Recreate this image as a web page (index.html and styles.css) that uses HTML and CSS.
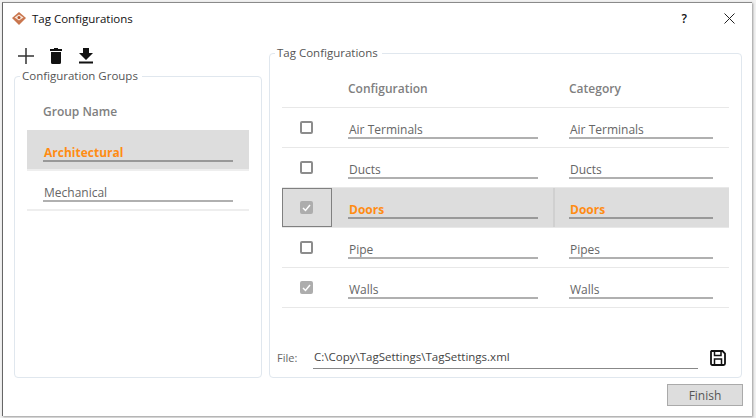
FILE: index.html
```html
<!DOCTYPE html>
<html>
	<head>
		<meta charset="UTF-8">
		<title>Tag Configurations</title>
		<link rel="stylesheet" href="styles.css">
	</head>
	<body>
		<div class="window">
			<div class="titlebar">
				<svg class="logo" width="14" height="13" viewBox="0 0 14 13">
					<path d="M7 0 14 6 7 13 0 6Z" fill="#c9764e"/>
					<path d="M2.500 5.500 7 2.500 11.500 5.500 7 8.500Z" fill="#f8e6da"/>
					<circle cx="7" cy="5.500" r="1.500" fill="#b5562c"/>
				</svg>
				<span class="title">Tag Configurations</span>
				<span class="help">?</span>
				<svg class="close" width="11" height="11" viewBox="0 0 11 11">
					<path d="M.5.5 10.500 10.500M10.500.5.500 10.500" stroke="#222" fill="none"/>
				</svg>
			</div>
			<div class="main">
				<div class="left">
					<div class="toolbar">
						<svg width="16" height="16" viewBox="0 0 16 16">
							<path d="M8 0V16M0 8H16" stroke="#333" stroke-width="1.500" fill="none"/>
						</svg>
						<svg width="12" height="16" viewBox="0 0 12 16">
							<path d="M4 0H8V1H12V3H0V1H4ZM1 4H11V14.500Q11 16 9.500 16H2.500Q1 16 1 14.500Z" fill="#111"/>
						</svg>
						<svg width="14" height="16" viewBox="0 0 14 16">
							<path d="M4 0H10V5H14L7 12 0 5H4ZM0 13.500H14V15.500H0Z" fill="#111"/>
						</svg>
					</div>
					<fieldset class="panel groups">
						<legend>Configuration Groups</legend>
						<div class="group-head">Group Name</div>
						<div class="group-row selected"><span class="field">Architectural</span></div>
						<div class="group-row"><span class="field">Mechanical</span></div>
					</fieldset>
				</div>
				<fieldset class="panel tags">
					<legend>Tag Configurations</legend>
					<div class="tag-row head">
						<div class="cell-check"></div>
						<div class="cell-conf">Configuration</div>
						<div class="cell-cat">Category</div>
					</div>
					<div class="tag-row">
						<div class="cell-check"><span class="box"></span></div>
						<div class="cell-conf"><span class="field">Air Terminals</span></div>
						<div class="cell-cat"><span class="field">Air Terminals</span></div>
					</div>
					<div class="tag-row">
						<div class="cell-check"><span class="box"></span></div>
						<div class="cell-conf"><span class="field">Ducts</span></div>
						<div class="cell-cat"><span class="field">Ducts</span></div>
					</div>
					<div class="tag-row selected">
						<div class="cell-check">
							<span class="box checked">
								<svg width="9" height="8" viewBox="0 0 9 8"><path d="M1 4 3.500 6.500 8 1" stroke="#fff" stroke-width="1.500" fill="none"/></svg>
							</span>
						</div>
						<div class="cell-conf"><span class="field">Doors</span></div>
						<div class="cell-cat"><span class="field">Doors</span></div>
					</div>
					<div class="tag-row">
						<div class="cell-check"><span class="box"></span></div>
						<div class="cell-conf"><span class="field">Pipe</span></div>
						<div class="cell-cat"><span class="field">Pipes</span></div>
					</div>
					<div class="tag-row">
						<div class="cell-check">
							<span class="box checked">
								<svg width="9" height="8" viewBox="0 0 9 8"><path d="M1 4 3.500 6.500 8 1" stroke="#fff" stroke-width="1.500" fill="none"/></svg>
							</span>
						</div>
						<div class="cell-conf"><span class="field">Walls</span></div>
						<div class="cell-cat"><span class="field">Walls</span></div>
					</div>
					<div class="file-row">
						<span class="file-label">File:</span>
						<span class="file-path">C:\Copy\TagSettings\TagSettings.xml</span>
						<svg width="16" height="16" viewBox="0 0 16 16">
							<path d="M1.500 1H12.500L15 3.500V13.500Q15 15 13.500 15H2.500Q1 15 1 13.500V1.500Z" fill="none" stroke="#111" stroke-width="1.800"/>
							<path d="M4.500 1.500V5.500H11V1.500M4.500 14.500V9H11.500V14.500" fill="none" stroke="#111" stroke-width="1.500"/>
						</svg>
					</div>
				</fieldset>
			</div>
			<div class="footer"><button class="finish">Finish</button></div>
		</div>
	</body>
</html>
```

FILE: styles.css
```css
*{margin:0;padding:0;box-sizing:border-box}
html,body{height:100%;overflow:hidden}
body{background:#f1f1f1;font-family:"Open Sans","Noto Sans",sans-serif;font-size:12px;color:#666;padding:2px 4px 2px 2px}
.window{height:414px;background:#fff;border-left:1px solid #666;border-top:1px solid #8a8a8a;box-shadow:1px 1px 2px #999;display:flex;flex-direction:column}

.titlebar{height:31px;display:flex;align-items:center;padding-left:9px;color:#111}
.title{margin-left:6px;font-size:11.500px}
.help{margin-left:auto;font-size:12px;font-weight:600}
.close{margin:0 17px 0 37px}

.main{display:flex;gap:7px;padding:0 10px 0 11px}
.left{width:248px}
.toolbar{height:36px;display:flex;gap:16px;padding:14px 0 0 4px;align-items:flex-start}
.toolbar svg:last-child{margin-left:1px}

.panel{border:1px solid #e0e7ee;border-radius:4px;padding:0;min-width:0}
.panel legend{margin-left:-7px;padding:0 4px 0 2px;font-size:11.500px;color:#555;line-height:14px}
.groups{height:309px;margin-top:-1px;padding:0 12px}
.tags{flex:1;height:332px;padding:0 12px;margin-top:12px}

.group-head{height:47px;padding:21px 0 0 16px;font-weight:600;color:#808080;line-height:16px}
.group-row{height:40px;display:flex;align-items:flex-end;padding:0 16px 7px;border-bottom:2px solid #eee}
.group-row.selected{height:41px;background:#ddd}
.field{display:block;width:100%;border-bottom:2px solid #b0b0b0;line-height:15px;padding-left:1px;height:17px}
.selected .field{color:#ff8c14;font-weight:700;border-bottom-color:#999}

.tag-row{height:40px;display:flex;border-bottom:1px solid #e8e8e8}
.tag-row.head{height:48px;font-weight:600;color:#808080;padding-top:20px}
.tag-row.selected{background:#ddd}
.cell-check{width:50px;display:flex;align-items:center;justify-content:center;padding-right:1px}
.cell-conf{width:222px;padding:0 16px}
.cell-cat{flex:1;padding:0 16px 0 15px}
.tag-row:not(.head) .cell-conf,.tag-row:not(.head) .cell-cat{display:flex;align-items:flex-end;padding-bottom:8px}
.selected .cell-check{border:1px solid #808080}
.tag-row.selected .cell-conf{border-right:1px solid #d0d0d0;padding-right:15px}
.tag-row.selected .cell-cat{border-left:1px solid #d0d0d0;padding-left:14px}
.box{width:13px;height:13px;border:2px solid #8c8c8c;border-radius:2px;background:#fff;display:flex;align-items:center;justify-content:center}
.box.checked{background:#adadad;border-color:#adadad}

.file-row{display:flex;align-items:flex-end;margin:41px 0 0 -5px}
.file-label{width:36px;font-size:11px;line-height:16px;color:#666;margin-bottom:3px}
.file-path{width:385px;border-bottom:1px solid #888;color:#444;font-size:11.500px;line-height:15px;height:20px;padding-left:1px}
.file-row svg{margin-left:12px;margin-bottom:3px}

.footer{display:flex;justify-content:flex-end;padding:6px 9px 0 0}
.finish{width:76px;height:22px;background:#ddd;border:1px solid #aaa;font:12px "Open Sans",sans-serif;color:#555}
```
